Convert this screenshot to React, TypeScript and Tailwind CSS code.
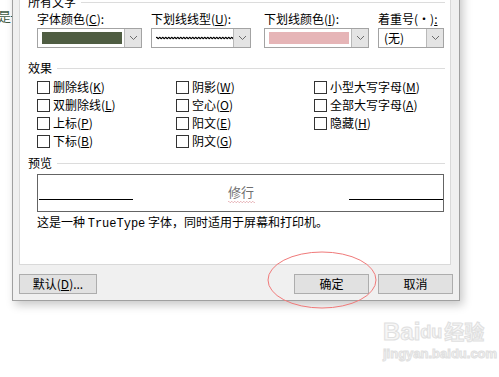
import React from "react";

const cjk = "font-['Noto_Sans_CJK_SC','Noto_Sans',sans-serif]";

function Chevron() {
    return (
        <svg width="9" height="6" viewBox="0 0 9 6" className="block">
            <path d="M1 1 L4.5 4.5 L8 1" fill="none" stroke="#6b6b6b" strokeWidth="1" />
        </svg>
    );
}

function Dropdown({ width, children }: { width: string; children: React.ReactNode }) {
    return (
        <div className={`${width} flex h-[20px] border border-[#a3a3a3] bg-white`}>
            <div className="flex flex-1 items-center overflow-hidden pl-[3px]">{children}</div>
            <div className="flex w-[17px] items-center justify-center border-l border-[#b9b9b9] bg-[#e4e4e4]">
                <Chevron />
            </div>
        </div>
    );
}

function Wavy({ width, color, stroke = 0.9 }: { width: number; color: string; stroke?: number }) {
    let d = "M0 2";
    for (let x = 0; x < width; x += 3) {
        d += ` Q${x + 0.75} 0.5 ${x + 1.5} 2 T${x + 3} 2`;
    }
    return (
        <svg width={width} height="4" viewBox={`0 0 ${width} 4`} className="block">
            <path d={d} fill="none" stroke={color} strokeWidth={stroke} />
        </svg>
    );
}

function GroupHeader({ title }: { title: string }) {
    return (
        <div className="flex h-[16px] items-center pl-[8px] pr-[5px]">
            <span className="leading-[16px]">{title}</span>
            <div className="ml-[5px] h-px flex-1 bg-[#dcdcdc]" />
        </div>
    );
}

function Label({ text, key_, suffix = ":" }: { text: string; key_: string; suffix?: string }) {
    return (
        <div className="h-[16px] whitespace-nowrap leading-[16px]">
            {text}(<span className="underline">{key_}</span>){suffix}
        </div>
    );
}

function Check({ text, key_ }: { text: string; key_: string }) {
    return (
        <div className="flex h-[18px] items-center">
            <div className="h-[13px] w-[13px] border border-[#333333] bg-white" />
            <span className="ml-[3px] whitespace-nowrap leading-[16px]">
                {text}(<span className="underline">{key_}</span>)
            </span>
        </div>
    );
}

function Button({ width, children }: { width: string; children: React.ReactNode }) {
    return (
        <div className={`${width} flex h-[20px] items-center justify-center border border-[#adadad] bg-[#e1e1e1] leading-[16px]`}>
            {children}
        </div>
    );
}

export default function App() {
    return (
        <div className={`relative h-[377px] w-[499px] overflow-hidden bg-white text-[12px] text-black ${cjk}`}>
            {/* document behind the dialog */}
            <div className="absolute left-[-2px] top-[7px] flex items-center">
                <span className="text-[13px] leading-[18px] text-[#3e5b45]">是</span>
                <div className="h-px w-[6px] bg-[#3e5b45]" />
            </div>

            <div className="relative ml-[12px] mt-[-20px] w-[448px] border border-[#a0a0a0] bg-[#f0f0f0] shadow-[3px_4px_9px_rgba(0,0,0,0.22)]">
                <div className="ml-[6px] mt-[7px] w-[432px] border border-[#d9d9d9] bg-white pb-[32px] pt-[5px]">
                    <GroupHeader title="所有文字" />
                    <div className="mt-[1px] grid grid-cols-[114px_113px_114px_66px] pl-[17px]">
                        <div>
                            <Label text="字体颜色" key_="C" />
                            <div className="mt-[1px]">
                                <Dropdown width="w-[105px]">
                                    <div className="ml-[1px] h-[12px] w-[80px] bg-[#4f5d42]" />
                                </Dropdown>
                            </div>
                        </div>
                        <div>
                            <Label text="下划线线型" key_="U" />
                            <div className="mt-[1px]">
                                <Dropdown width="w-[100px]">
                                    <div className="ml-[1px]">
                                        <Wavy width={78} color="#000000" stroke={1.2} />
                                    </div>
                                </Dropdown>
                            </div>
                        </div>
                        <div>
                            <Label text="下划线颜色" key_="I" />
                            <div className="mt-[1px]">
                                <Dropdown width="w-[105px]">
                                    <div className="ml-[1px] h-[12px] w-[80px] bg-[#e6b5b7]" />
                                </Dropdown>
                            </div>
                        </div>
                        <div>
                            <div className="h-[16px] overflow-hidden whitespace-nowrap leading-[16px]">
                                着重号(·)<span className="underline">:</span>
                            </div>
                            <div className="mt-[1px]">
                                <Dropdown width="w-[66px]">
                                    <span className="ml-[2px] leading-[16px]">(无)</span>
                                </Dropdown>
                            </div>
                        </div>
                    </div>

                    <div className="mt-[12px]">
                        <GroupHeader title="效果" />
                    </div>
                    <div className="mt-[2px] grid grid-flow-col grid-cols-[139px_138px_1fr] grid-rows-4 pl-[17px]">
                        <Check text="删除线" key_="K" />
                        <Check text="双删除线" key_="L" />
                        <Check text="上标" key_="P" />
                        <Check text="下标" key_="B" />
                        <Check text="阴影" key_="W" />
                        <Check text="空心" key_="O" />
                        <Check text="阳文" key_="E" />
                        <Check text="阴文" key_="G" />
                        <Check text="小型大写字母" key_="M" />
                        <Check text="全部大写字母" key_="A" />
                        <Check text="隐藏" key_="H" />
                    </div>

                    <div className="mt-[5px]">
                        <GroupHeader title="预览" />
                    </div>
                    <div className="ml-[17px] mt-[3px] flex h-[38px] w-[407px] border border-[#646464]">
                        <div className="ml-[1px] mt-[24px] h-px w-[94px] bg-black" />
                        <div className="flex flex-1 flex-col items-center pt-[9px]">
                            <span className="text-[13px] leading-[16px] text-[#6f6f6f]">修行</span>
                            <Wavy width={27} color="#e3a7ad" />
                        </div>
                        <div className="mt-[24px] h-px w-[94px] bg-black" />
                    </div>
                    <div className="ml-[17px] mt-[2px] whitespace-nowrap leading-[16px]">
                        这是一种 <span className="font-['Liberation_Mono',monospace]">TrueType</span> 字体，同时适用于屏幕和打印机。
                    </div>
                </div>

                <div className="mt-[9px] flex pb-[6px] pl-[6px] pr-[6px]">
                    <Button width="w-[78px]">
                        默认(<span className="underline">D</span>)...
                    </Button>
                    <div className="flex-1" />
                    <Button width="w-[75px]">确定</Button>
                    <div className="ml-[9px]">
                        <Button width="w-[75px]">取消</Button>
                    </div>
                </div>
            </div>

            {/* red annotation ellipse */}
            <svg className="pointer-events-none absolute left-0 top-0" width="499" height="377">
                <ellipse cx="322" cy="280" rx="54" ry="28" fill="none" stroke="#f07a7a" strokeWidth="1" />
            </svg>

            {/* watermark */}
            <div className="pointer-events-none absolute left-[383px] top-[318px] flex flex-col items-start text-[#f6f6f6] [-webkit-text-stroke:1px_#e0e0e0]">
                <div className="flex items-end font-['Liberation_Sans',sans-serif] text-[24px] font-bold leading-[28px]">
                    <span>Bai</span>
                    <span className="text-[18px]">du</span>
                    <span className={`ml-[2px] text-[20px] ${cjk}`}>经验</span>
                </div>
                <div className="font-['Liberation_Sans',sans-serif] text-[13px] font-bold leading-[16px]">jingyan.baidu.com</div>
            </div>
        </div>
    );
}
